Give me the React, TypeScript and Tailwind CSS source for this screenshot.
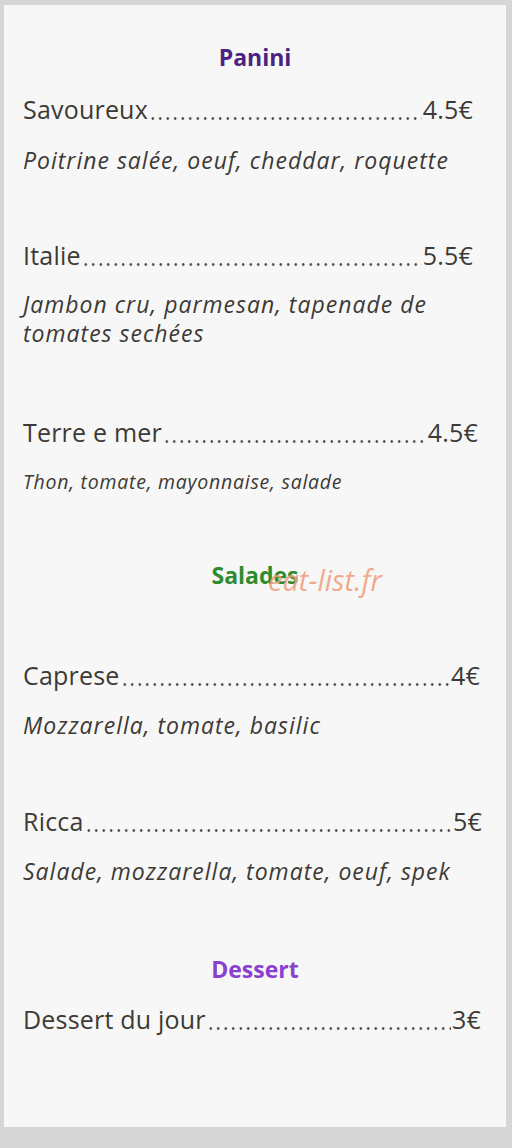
function Row({ name, price, width }: { name: string; price: string; width: string }) {
  return (
    <div className={`flex ${width} text-[25px] leading-[32px] tracking-[0.2px] text-[#3d3a35] whitespace-nowrap`}>
      <span className="shrink-0">{name}</span>
      <span className="mx-[1px] mb-[5px] h-[3px] min-w-0 flex-1 self-end bg-[radial-gradient(circle,#4a4641_1px,transparent_1.6px)] bg-[length:7.5px_3px] bg-repeat-x" />
      <span className="shrink-0">{price}</span>
    </div>
  );
}

function Desc({ children, small }: { children: React.ReactNode; small?: boolean }) {
  return (
    <p
      className={`italic text-[#3d3a35] leading-[29px] ${
        small ? 'text-[19.5px] tracking-[0.75px]' : 'text-[23px] tracking-[1px]'
      }`}
    >
      {children}
    </p>
  );
}

export default function App() {
  return (
    <div className="min-h-[1148px] bg-[#d6d6d6] pt-[5px] pl-[4px] font-['Open_Sans',sans-serif]">
      <div className="w-[502px] bg-[#f7f7f7] pt-[38px] pb-[92px] px-[19px]">
        <h2 className="text-center text-[23px] leading-[28px] font-bold text-[#4a2480]">Panini</h2>

        <div className="mt-[22px]">
          <Row name="Savoureux" price="4.5€" width="w-[450px]" />
        </div>
        <div className="mt-[21px]">
          <Desc>Poitrine salée, oeuf, cheddar, roquette</Desc>
        </div>

        <div className="mt-[64px]">
          <Row name="Italie" price="5.5€" width="w-[450px]" />
        </div>
        <div className="mt-[19px]">
          <Desc>
            Jambon cru, parmesan, tapenade de
            <br />
            tomates sechées
          </Desc>
        </div>

        <div className="mt-[68px]">
          <Row name="Terre e mer" price="4.5€" width="w-[455px]" />
        </div>
        <div className="mt-[19px]">
          <Desc small>Thon, tomate, mayonnaise, salade</Desc>
        </div>

        <div className="relative mt-[65px]">
          <h2 className="text-center text-[23px] leading-[28px] font-bold text-[#2e8b2e]">Salades</h2>
          <span className="absolute left-[245px] top-[3px] italic text-[29px] leading-[32px] text-[#f0a07c]/90">
            eat-list.fr
          </span>
        </div>

        <div className="mt-[70px]">
          <Row name="Caprese" price="4€" width="w-[457px]" />
        </div>
        <div className="mt-[20px]">
          <Desc>Mozzarella, tomate, basilic</Desc>
        </div>

        <div className="mt-[65px]">
          <Row name="Ricca" price="5€" width="w-[459px]" />
        </div>
        <div className="mt-[20px]">
          <Desc>Salade, mozzarella, tomate, oeuf, spek</Desc>
        </div>

        <h2 className="mt-[69px] text-center text-[23px] leading-[28px] font-bold text-[#8a3fd0]">Dessert</h2>

        <div className="mt-[20px]">
          <Row name="Dessert du jour" price="3€" width="w-[458px]" />
        </div>
      </div>
    </div>
  );
}
